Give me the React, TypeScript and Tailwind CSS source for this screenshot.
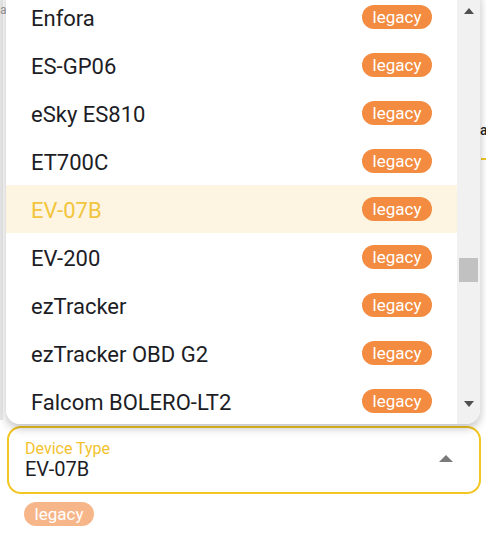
import React from "react";

const items = [
  "Enfora",
  "ES-GP06",
  "eSky ES810",
  "ET700C",
  "EV-07B",
  "EV-200",
  "ezTracker",
  "ezTracker OBD G2",
  "Falcom BOLERO-LT2",
];

function Badge({ faded }: { faded?: boolean }) {
  return (
    <span
      className={`inline-flex h-[24px] w-[70px] items-center justify-center rounded-full text-[17px] leading-none text-white ${
        faded ? "bg-[#f7b68a]" : "bg-[#f38b40]"
      }`}
    >
      legacy
    </span>
  );
}

export default function App() {
  return (
    <div
      className="relative h-[545px] w-[486px] overflow-hidden bg-white"
      style={{ fontFamily: "Roboto, 'Liberation Sans', sans-serif" }}
    >
      {/* background page hints */}
      <div className="absolute left-0 top-0 h-[420px] w-[3px] bg-[#e9e9e9]" />
      <div className="absolute left-0 top-[4px] text-[12px] leading-none text-[#9a9a9a]">a</div>
      <div className="absolute left-[480px] top-[123px] text-[14px] font-medium leading-none text-[#222]">a</div>
      <div className="absolute left-[481px] top-[158px] h-[2px] w-[6px] bg-[#f3c623]" />

      {/* field area in flow */}
      <div className="flex flex-col pl-[7px] pr-[5px] pt-[426px]">
        <div className="flex h-[68px] items-center rounded-[14px] border-2 border-[#f3c623] pl-[16px] pr-[26px]">
          <div className="flex flex-1 flex-col">
            <span className="text-[16px] leading-[19px] text-[#f2c22e]">Device Type</span>
            <span className="text-[20px] leading-[23px] text-[#1d1d26]">EV-07B</span>
          </div>
          <svg width="14" height="8" viewBox="0 0 14 8" className="mb-[3px]">
            <path d="M0 7 L7 0 L14 7 Z" fill="#7a7a7a" />
          </svg>
        </div>
        <div className="pl-[17px] pt-[8px]">
          <Badge faded />
        </div>
      </div>

      {/* dropdown popover */}
      <div className="absolute left-[6px] top-[-7px] flex h-[431px] w-[474px] overflow-hidden rounded-b-[14px] bg-white shadow-[0_4px_10px_rgba(0,0,0,0.25)]">
        <div className="flex flex-1 flex-col">
          {items.map((it) => {
            const active = it === "EV-07B";
            return (
              <div
                key={it}
                className={`flex h-[48px] shrink-0 items-center justify-between pl-[25px] pr-[25px] ${
                  active ? "bg-[#fdf5e2]" : "bg-white"
                }`}
              >
                <span
                  className={`pt-[3px] text-[22px] leading-none ${active ? "text-[#f2c53d]" : "text-[#1d1d26]"}`}
                >
                  {it}
                </span>
                <Badge />
              </div>
            );
          })}
        </div>
        <div className="relative flex w-[23px] flex-col items-center bg-[#f1f1f1]">
          <svg width="10" height="6" viewBox="0 0 10 6" className="mt-[15px]">
            <path d="M0 6 L5 0 L10 6 Z" fill="#505050" />
          </svg>
          <div className="absolute left-[2px] top-[265px] h-[24px] w-[19px] bg-[#c1c1c1]" />
          <svg width="10" height="6" viewBox="0 0 10 6" className="absolute bottom-[17px] left-[7px]">
            <path d="M0 0 L5 6 L10 0 Z" fill="#505050" />
          </svg>
        </div>
      </div>
    </div>
  );
}
